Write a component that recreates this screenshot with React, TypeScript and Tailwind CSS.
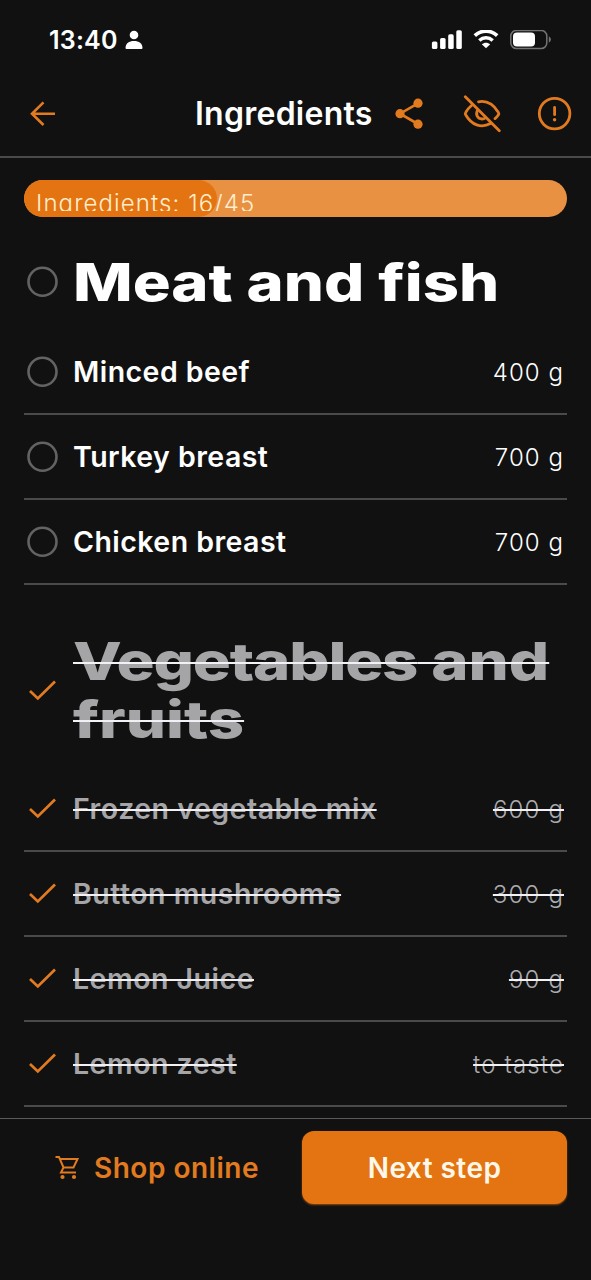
type Item = { name: string; amount: string }

const meat: Item[] = [
  { name: "Minced beef", amount: "400 g" },
  { name: "Turkey breast", amount: "700 g" },
  { name: "Chicken breast", amount: "700 g" },
]

const vegetables: Item[] = [
  { name: "Frozen vegetable mix", amount: "600 g" },
  { name: "Button mushrooms", amount: "300 g" },
  { name: "Lemon Juice", amount: "90 g" },
  { name: "Lemon zest", amount: "to taste" },
]

const Mark = ({ done }: { done?: boolean }) => (
  <svg width="36" height="36" viewBox="0 0 36 36" fill="none" className="shrink-0">
    {done ? (
      <path d="M6 18 L13.8 25.4 L31 8.5" stroke="#e27b20" strokeWidth="2.7" />
    ) : (
      <circle cx="18.5" cy="17.7" r="14" stroke="#636363" strokeWidth="2.6" />
    )}
  </svg>
)

const Row = ({ item, done }: { item: Item; done?: boolean }) => (
  <li className="flex h-[85px] items-center border-b-2 border-[#4a4a4a]">
    <Mark done={done} />
    <span className={done
      ? "ml-[13px] mt-[2px] text-[28.5px] font-semibold tracking-[0.5px] text-[#a5a5a8] line-through decoration-[#f3f1f6] decoration-2"
      : "ml-[13px] mt-[2px] text-[28.5px] font-semibold tracking-[0.45px] text-white"}>
      {item.name}
    </span>
    <span className={done
      ? "ml-auto mr-[3px] mt-[2px] text-2xl font-[350] tracking-[1.15px] text-[#adadb0] line-through decoration-[#f3f1f6] decoration-[1.5px]"
      : "ml-auto mr-[3px] mt-[2px] text-2xl font-[350] tracking-[1.05px] text-white"}>
      {item.amount}
    </span>
  </li>
)

const StatusBar = () => (
  <div className="flex h-[72px] items-center pl-[49px] pr-[40px] pt-[7px]">
    <span className="pt-px text-[25px] font-semibold leading-none tracking-[0.2px]">13:40</span>
    <svg width="18" height="20" viewBox="0 0 18 20" fill="white" className="ml-[7px]">
      <circle cx="9" cy="5" r="4.3" />
      <path d="M0.5 18 C0.5 13.5 4 11 9 11 S17.5 13.5 17.5 18 Q17.5 19 16.5 19 H1.5 Q0.5 19 0.5 18 Z" />
    </svg>
    <div className="ml-auto flex items-center">
      <svg width="31" height="20" viewBox="0 0 31 20" fill="white">
        <rect x="0.9" y="11.5" width="5.5" height="7.5" rx="1.6" />
        <rect x="9.1" y="8" width="5.5" height="11" rx="1.6" />
        <rect x="17.2" y="4.3" width="5.5" height="14.7" rx="1.6" />
        <rect x="25.3" y="0.2" width="5.5" height="18.8" rx="1.6" />
      </svg>
      <svg width="26" height="20" viewBox="0 0 26 20" fill="none" className="ml-[11px]">
        <path d="M1.8 5.6 C8 -0.4 18 -0.4 24.2 5.6" stroke="white" strokeWidth="3.6" />
        <path d="M6.3 10.4 C10.2 6.8 15.8 6.8 19.7 10.4" stroke="white" strokeWidth="3.4" />
        <path d="M8.8 14.2 C11.3 12.1 14.7 12.1 17.2 14.2 L13 18.3 Z" fill="white" />
      </svg>
      <svg width="41" height="20" viewBox="0 0 41 20" fill="none" className="ml-[11px]">
        <rect x="0.8" y="0.5" width="36" height="18" rx="5.6" stroke="#737373" strokeWidth="1.5" />
        <rect x="3" y="2.5" width="22" height="14" rx="4" fill="white" />
        <path d="M38.8 6.2 Q41 7.5 41 9.5 T38.8 12.8 Z" fill="#737373" />
      </svg>
    </div>
  </div>
)

const Header = () => (
  <header className="flex h-[86px] items-center border-b-2 border-[#4a4a4a] pl-[29px] pr-[18px]">
    <svg width="28" height="28" viewBox="0 0 28 28" fill="none" stroke="#e27b20" strokeWidth="2.6">
      <path d="M26 13.7 H3 M14.5 2.4 L3 13.7 L14.5 25" />
    </svg>
    <h1 className="ml-[138px] w-[178px] whitespace-nowrap text-[32px] font-semibold leading-none tracking-[0.25px]">Ingredients</h1>
    <svg width="30" height="32" viewBox="0 0 30 32" fill="#e27b20" className="ml-[22px]">
      <path d="M23 5.3 L5 15.7 L23 26" fill="none" stroke="#e27b20" strokeWidth="2.6" />
      <circle cx="5" cy="15.7" r="4.6" />
      <circle cx="23" cy="5.2" r="4.6" />
      <circle cx="23" cy="26.2" r="4.6" />
    </svg>
    <svg width="38" height="38" viewBox="0 0 38 38" fill="none" stroke="#e27b20" strokeWidth="2.8" className="ml-[38px]" strokeLinecap="round">
      <path d="M2.3 1.8 L36.3 35.8" />
      <path d="M15.5 6.8 C24 5.2 30.5 9.5 35.3 17.2 Q36.2 18.6 35.3 20 Q34 22 32 23.6" />
      <path d="M8.5 10.5 Q5 13.5 2.8 17.2 Q1.9 18.6 2.8 20 C8.5 30 18 33.5 27.5 28.6" />
      <path d="M14.5 15.4 C12.3 19.5 14.5 24 19 24 Q21 24 22.3 23" />
    </svg>
    <svg width="36" height="36" viewBox="0 0 36 36" fill="none" stroke="#e27b20" strokeWidth="2.8" className="ml-auto">
      <circle cx="17.6" cy="17.6" r="15.3" />
      <path d="M17.6 11.5 V18.7" strokeLinecap="round" />
      <circle cx="17.6" cy="23.7" r="1.7" fill="#e27b20" stroke="none" />
    </svg>
  </header>
)

const App = () => {
  return (
    <div className="flex h-[1280px] w-[591px] flex-col overflow-hidden bg-[#111111] font-['Inter','Liberation_Sans',sans-serif] text-white">
      <StatusBar />
      <Header />

      <main className="flex h-[960px] flex-col overflow-hidden px-6 pt-[22px]">
        <div className="h-[37px] shrink-0 overflow-hidden rounded-full bg-[#e99142]">
          <div className="h-full w-[193px] rounded-full bg-[#e37411]">
            <div className="h-[31px] w-[240px] overflow-hidden whitespace-nowrap pl-[12px] pt-[8px] text-2xl font-[350] tracking-[1.1px] text-[#ffedcc]">
              Ingredients: 16/45
            </div>
          </div>
        </div>

        <div className="flex h-[113px] shrink-0 items-center pt-[17px]">
          <Mark />
          <h2 className="ml-[13px] origin-left scale-x-[1.217] whitespace-nowrap pt-px text-[52px] font-extrabold leading-[58px]">Meat and fish</h2>
        </div>
        <ul className="shrink-0">
          {meat.map((item) => <Row key={item.name} item={item} />)}
        </ul>

        <div className="flex h-[182px] shrink-0 items-center pt-[29px]">
          <Mark done />
          <h2 className="ml-[13px] origin-left scale-x-[1.22] whitespace-nowrap text-[52px] font-extrabold leading-[58px] text-[#a5a5a8] line-through decoration-[#f3f1f6] decoration-2">
            <span className="tracking-[-0.98px]">Vegetables</span> and<br />fruits
          </h2>
        </div>
        <ul className="shrink-0">
          {vegetables.map((item) => <Row key={item.name} item={item} done />)}
        </ul>
      </main>

      <footer className="flex flex-1 items-start border-t border-[#5a5a5a] pl-[55px] pr-6 pt-3">
        <button className="flex h-[73px] items-center text-[28px] font-semibold tracking-[0.5px] text-[#e27b20]">
          <svg width="24" height="25" viewBox="0 0 24 25" fill="none" stroke="#e27b20" strokeWidth="2">
            <path d="M0.5 2 H4 L8.5 12.5 H18.5 L22.5 4 H5 M8.5 12.5 L6 17.5 H21" />
            <circle cx="7.5" cy="22" r="2.1" fill="#e27b20" stroke="none" />
            <circle cx="19" cy="22" r="2.1" fill="#e27b20" stroke="none" />
          </svg>
          <span className="ml-[15px]">Shop online</span>
        </button>
        <button className="ml-auto h-[73px] w-[265px] rounded-xl bg-[#e37411] text-[28px] font-semibold tracking-[0.45px] text-[#fff8ea] shadow-[0_1px_2px_#8f4b12]">
          Next step
        </button>
      </footer>
    </div>
  )
}

export default App
